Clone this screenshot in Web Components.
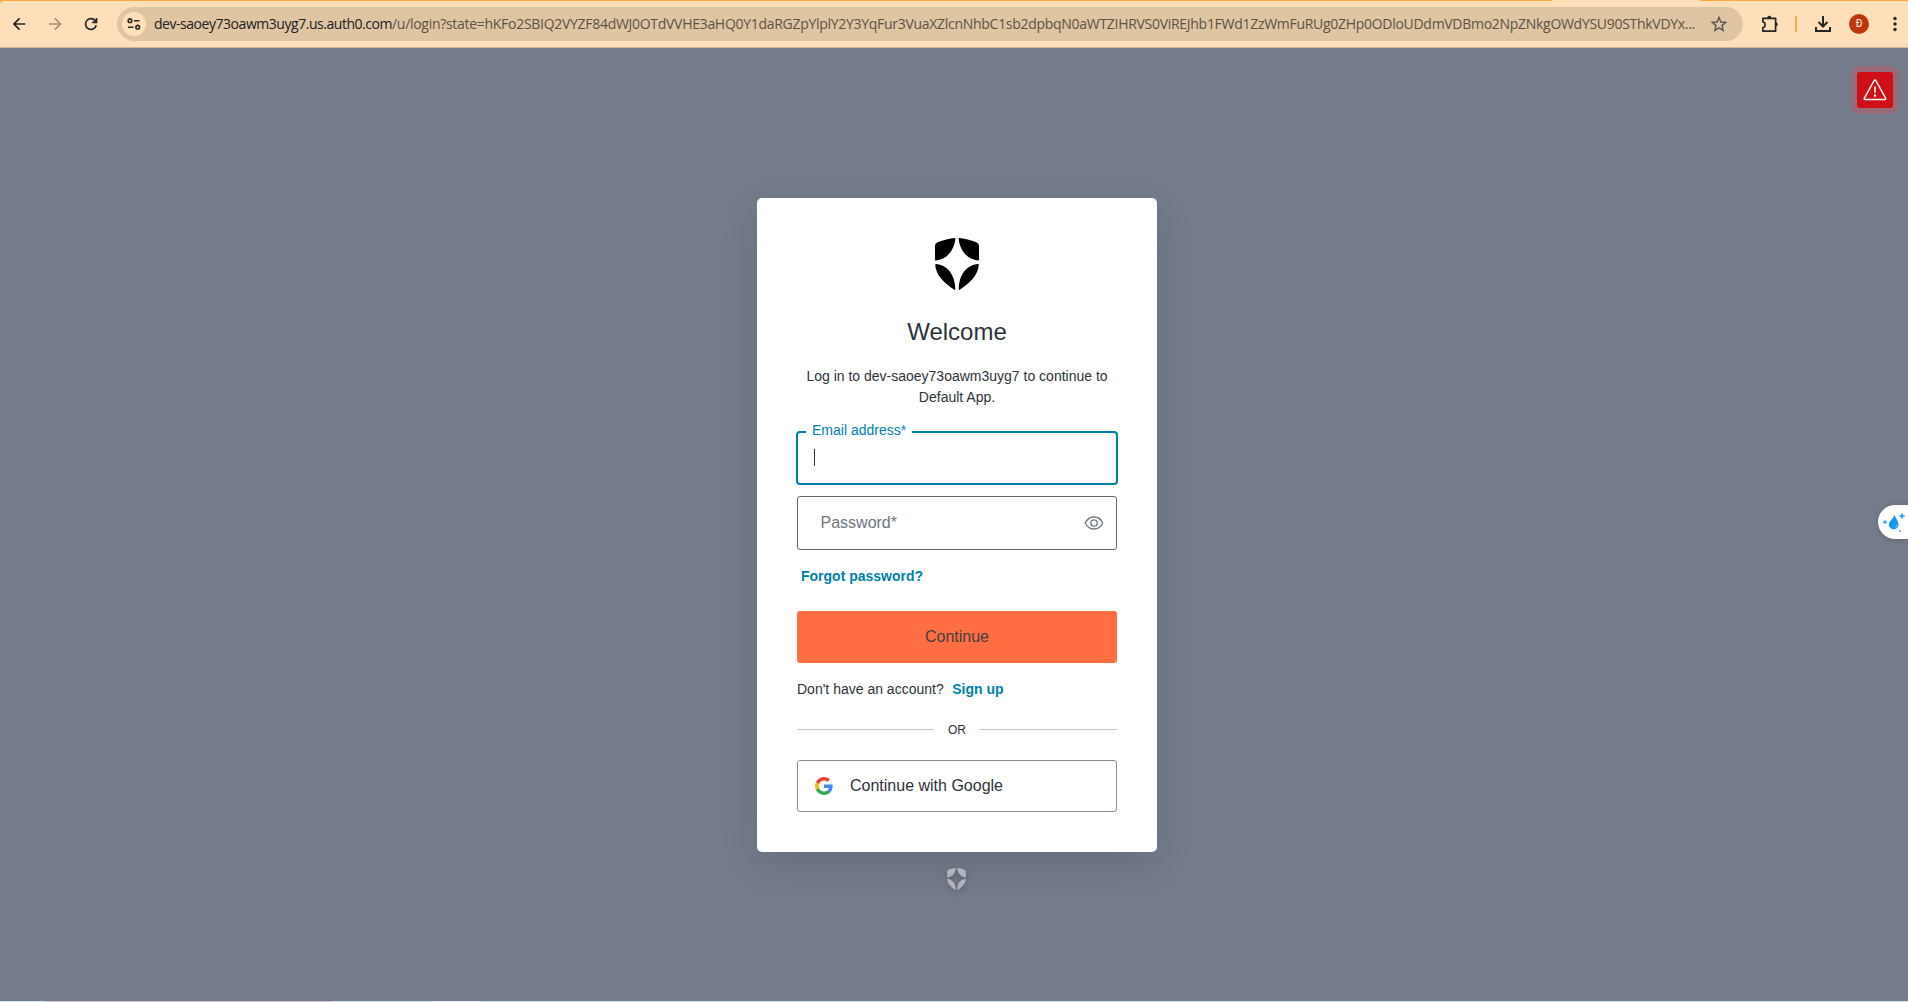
<!DOCTYPE html>
<html lang="en">
<head>
<meta charset="utf-8">
<title>Log in</title>
<style>
html,body{margin:0;height:100%;overflow:hidden;background:#747b8a}
body{font-family:"Liberation Sans",Arial,sans-serif;color:#2d333a}
</style>
</head>
<body>
<login-screen></login-screen>
<script>
const define = (name, html, setup) => customElements.define(name, class extends HTMLElement {
  connectedCallback() {
    if (this.shadowRoot) return;
    const t = document.createElement('template');
    t.innerHTML = html;
    this.attachShadow({mode: 'open'}).append(t.content.cloneNode(true));
    if (setup) setup(this, this.shadowRoot);
  }
});

define('auth-shield', `
<style>:host{display:block;width:44px;height:52px}svg{display:block;width:100%;height:100%}</style>
<svg viewBox="0 0 44 52" fill="currentColor"><g id="h"><path d="M20.3 0C14.5.5 8.200 2 2.600 4.300.9 5 0 6.500 0 8.300V21.800c0 .6.3.9.9.8C11.700 21.200 19.300 12.600 20.300.8Z"/><path d="M.2 27c0-.8.4-1.100 1.100-1C12 27.200 20.200 36 20.300 51.300c0 .6-.4.8-.9.4C9.200 45.200 1 37.400.2 27Z"/></g><use href="#h" transform="matrix(-1 0 0 1 44 0)"/></svg>`);

define('url-bar', `
<style>
:host{display:flex;align-items:center;box-sizing:border-box;width:1626px;height:34px;border-radius:17px;background:#dfc5a2;padding:0 16px 0 5px;margin-left:19px;flex:none}
.info{width:24px;height:24px;border-radius:50%;background:#ffdfb9;display:flex;align-items:center;justify-content:center}
.txt{margin-left:8px;font:14px/20px "Open Sans","Noto Sans",sans-serif;white-space:pre;color:#5b5348;flex:1;display:flex}
b{font-weight:400;color:#202124}
svg{display:block;flex:none}
</style>
<div class="info"><svg width="14" height="12" viewBox="0 0 14 12" fill="none" stroke="#2b2722" stroke-width="1.600"><circle cx="3" cy="2.700" r="1.800"/><path d="M7 2.700h5.500M1 9.200h5.500"/><circle cx="10.700" cy="9.200" r="1.800"/></svg></div>
<div class="txt"><b data-w="238">dev-saoey73oawm3uyg7.us.auth0.com</b><span data-w="1303">/u/login?state=hKFo2SBIQ2VYZF84dWJ0OTdVVHE3aHQ0Y1daRGZpYlplY2Y3YqFur3VuaXZlcnNhbC1sb2dpbqN0aWTZIHRVS0ViREJhb1FWd1ZzWmFuRUg0ZHp0ODloUDdmVDBmo2NpZNkgOWdYSU90SThkVDYx...</span></div>
<svg width="16" height="16" viewBox="0 0 16 16" fill="none" stroke="#5d5b58" stroke-width="1.500"><path d="m8 1.500 1.900 4.500 4.800.4-3.700 3.200 1.100 4.800L8 11.900l-4.100 2.500L5 9.600 1.300 6.400l4.800-.4Z"/></svg>`,
(host, root) => {
  for (const el of root.querySelectorAll('[data-w]')) {
    const w = el.getBoundingClientRect().width;
    el.style.letterSpacing = ((+el.dataset.w - w) / el.textContent.length) + 'px';
  }
});

define('browser-bar', `
<style>
:host{display:block;height:48px;background:#ffa93f;box-sizing:border-box;padding-top:1px;border-bottom:1px solid #cdb49a}
.bar{height:46px;background:#ffdfb9;border-radius:4px 0 0 0;display:flex;align-items:center;position:relative;padding-left:12px}
.tab{position:absolute;left:1552px;top:-1px;width:148px;height:1px;background:#ffdfb9}
svg{display:block;flex:none}
.sep{width:2px;height:16px;background:#ffa93f;border-radius:1px;margin-left:16px}
.av{width:20px;height:20px;border-radius:50%;background:#bf360c;color:#fff;font:10px/20px Roboto,sans-serif;text-align:center;margin-left:17px}
</style>
<div class="bar"><div class="tab"></div>
<svg width="14" height="14" viewBox="0 0 14 14" fill="none" stroke="#242424" stroke-width="1.700"><path d="M13.300 7H2.300M7.500 1.300 1.900 7l5.600 5.700"/></svg>
<svg style="margin-left:22px" width="14" height="14" viewBox="0 0 14 14" fill="none" stroke="#a28f78" stroke-width="1.700"><path d="M1 7h11M6.800 1.300 12.400 7l-5.600 5.700"/></svg>
<svg style="margin-left:22px" width="14" height="14" viewBox="0 0 14 14" fill="none" stroke="#242424" stroke-width="1.700"><path d="M12.200 8.200A5.400 5.400 0 1 1 11.600 4.300M12.500 1v4.300H8.200"/></svg>
<url-bar></url-bar>
<svg style="margin-left:18px" width="19" height="18" viewBox="0 0 19 18" fill="none" stroke="#242424" stroke-width="1.700"><path d="M1.900 3.300h12.700v12.900H1.900v-3.600c3-.3 3-5.300 0-5.600Z" stroke-linejoin="round"/><path d="M6.500 2.500c0-1.700 3.500-1.700 3.500 0ZM15 7.800c1.700 0 1.700 3.200 0 3.200Z" fill="#242424" stroke-width="1"/></svg>
<div class="sep" style="margin-left:15px"></div>
<svg style="margin-left:17px" width="18" height="18" viewBox="0 0 18 18" fill="none" stroke="#242424" stroke-width="2"><path d="M9 1v10M4.500 7 9 11.500 13.500 7M2 12v4h14v-4"/></svg>
<div class="av">Đ</div>
<svg style="margin-left:24px" width="4" height="16" viewBox="0 0 4 16" fill="#242424"><circle cx="2" cy="2.500" r="1.700"/><circle cx="2" cy="8" r="1.700"/><circle cx="2" cy="13.500" r="1.700"/></svg>
</div>`);

define('text-field', `
<style>
:host{display:flex;align-items:center;box-sizing:border-box;height:54px;border:1px solid #65676e;border-radius:3px;position:relative;padding:0 12px 0 22.500px;justify-content:space-between;font-size:16px;line-height:18px;color:#6f7780}
:host([active]){border:2px solid #007fad;margin:0 -1px;padding-left:16px;color:#007fad;border-radius:4px}
:host([active]) .label{position:absolute;left:8px;top:-12px;background:#fff;padding:0 7px 0 6px;width:93px;font-size:14px;line-height:18px;white-space:nowrap}
.caret{display:none}
:host([active]) .caret{display:block;width:1px;height:17px;background:#2d333a;margin-top:-2px}
</style>
<span class="label"><slot></slot></span><span class="caret"></span><slot name="end"></slot>`);

define('continue-button', `
<style>:host{display:flex;align-items:center;justify-content:center;height:52px;border-radius:3px;background:#ff6f43;color:#3f3d43;font-size:16px;line-height:18px}</style><slot></slot>`);

define('or-divider', `
<style>:host{display:flex;align-items:center;font-size:12px;line-height:14px}
i{flex:1;height:1px;background:#c2c8d0;margin-top:-1px}span{width:46px;text-align:center}</style><i></i><span><slot></slot></span><i></i>`);

define('google-button', `
<style>:host{display:flex;align-items:center;box-sizing:border-box;height:52px;border:1px solid #8b8d92;border-radius:3px;padding-left:17px;font-size:16px;line-height:18px}
svg{display:block;margin-right:17px}</style>
<svg width="18" height="18" viewBox="0 0 48 48"><path fill="#EA4335" d="M24 9.500c3.540 0 6.710 1.220 9.210 3.600l6.850-6.850C35.900 2.380 30.470 0 24 0 14.620 0 6.510 5.380 2.560 13.220l7.980 6.190C12.430 13.720 17.740 9.500 24 9.500z"/><path fill="#4285F4" d="M46.980 24.550c0-1.570-.15-3.090-.38-4.550H24v9.020h12.940c-.58 2.960-2.260 5.480-4.780 7.180l7.730 6c4.510-4.180 7.090-10.360 7.090-17.650z"/><path fill="#FBBC05" d="M10.530 28.590c-.48-1.450-.76-2.990-.76-4.590s.27-3.140.76-4.590l-7.980-6.190C.92 16.460 0 20.120 0 24c0 3.880.92 7.540 2.560 10.780l7.970-6.190z"/><path fill="#34A853" d="M24 48c6.480 0 11.930-2.130 15.890-5.810l-7.730-6c-2.150 1.450-4.920 2.300-8.160 2.300-6.260 0-11.570-4.220-13.470-9.910l-7.980 6.190C6.510 42.620 14.620 48 24 48z"/></svg><slot></slot>`);

define('login-card', `
<style>
:host{display:flex;flex-direction:column;box-sizing:border-box;width:400px;height:654px;padding:40px;background:#fff;border-radius:5px;box-shadow:0 12px 40px rgba(0,0,0,.12);color:#2d333a}
auth-shield{color:#000;margin:0 auto}
h1{font-size:24px;line-height:28px;font-weight:400;margin:28px 0 0;text-align:center}
p{font-size:14px;line-height:21px;margin:20px 0 23px;text-align:center}
text-field+text-field{margin-top:11px}
a{font-size:14px;line-height:16px;font-weight:700;color:#007fad}
.forgot{margin:18px 0 27px 4px}
.sign{font-size:14px;line-height:16px;margin:18px 0 26px}
.sign a{margin-left:8.500px}
google-button{margin-top:23px}
</style>
<auth-shield></auth-shield>
<h1>Welcome</h1>
<p>Log in to dev-saoey73oawm3uyg7 to continue to Default App.</p>
<text-field active>Email address*</text-field>
<text-field>Password*<svg slot="end" width="20" height="14" viewBox="0 0 20 14" fill="none" stroke="#6f7780" stroke-width="1.300"><path d="M1.300 7C3 3 6.300 1 10 1s7 2 8.700 6c-1.700 4-5 6-8.700 6S3 11 1.300 7Z"/><circle cx="10" cy="7" r="3.200"/></svg></text-field>
<a class="forgot">Forgot password?</a>
<continue-button>Continue</continue-button>
<div class="sign">Don't have an account?<a>Sign up</a></div>
<or-divider>OR</or-divider>
<google-button>Continue with Google</google-button>`);

define('alert-badge', `
<style>:host{display:flex;width:36px;height:36px;background:#d00e17;border-radius:3px;box-shadow:0 0 0 6px #966a76;align-items:center;justify-content:center}</style>
<svg width="24" height="24" viewBox="0 0 24 24" fill="none" stroke="#fff" stroke-width="1.500"><path d="M11.200 2.500 1.400 20.200c-.4.700 0 1.400.8 1.400h19.600c.8 0 1.200-.7.8-1.400L12.800 2.500c-.4-.7-1.200-.7-1.600 0Z"/><path d="M12 8.500v6.300" stroke-width="1.600"/><circle cx="12" cy="17.500" r=".5"/></svg>`);

define('side-widget', `
<style>:host{display:block;width:30px;height:34px;background:#fff;border-radius:17px 0 0 17px;box-shadow:0 1px 6px rgba(0,0,0,.18)}svg{display:block}</style>
<svg width="30" height="34" viewBox="0 0 30 34" fill="#1b96ee"><path d="M16.500 9.500c.8 3.500 4 6.300 4 10.200a4.800 4.800 0 0 1-9.600 0c0-3.900 4.600-5.800 5.600-10.200Z"/><path d="M18.800 18.500c.5 2-.4 3.300-1.900 3.700 1.300.5 3.100-.8 1.900-3.700Z" fill="#fff"/><path d="m24 8 .9 2.200 2.200.8-2.200.8L24 14l-.9-2.200-2.200-.8 2.200-.8ZM7 15l.7 1.500 1.500.6-1.500.6L7 19.200l-.7-1.500-1.500-.6 1.500-.6Z" stroke="#51b2f4" stroke-width=".6"/><circle cx="22" cy="26" r="1.100" fill="#51b2f4"/></svg>`);

define('login-screen', `
<style>
:host{display:flex;flex-direction:column;width:1908px;height:1002px;overflow:hidden}
main{flex:1;display:flex;flex-direction:column;align-items:center;position:relative;padding:150px 0 0 6px;box-sizing:border-box}
.mark{width:19px;height:22px;margin:16px 1px 0 0;color:#b0b4bd;filter:drop-shadow(0 2px 3px rgba(0,0,0,.2))}
alert-badge{position:absolute;right:15px;top:24px}
side-widget{position:absolute;right:0;top:457px}
footer{height:1px;background:linear-gradient(90deg,#dce6f5 45px,#cfc4cd 45px 333px,#d3def0 333px 433px,#eef2fa 433px 481px,#d3def0 481px)}
</style>
<browser-bar></browser-bar>
<main><login-card></login-card><auth-shield class="mark"></auth-shield><alert-badge></alert-badge><side-widget></side-widget></main>
<footer></footer>`);
</script>
</body>
</html>
